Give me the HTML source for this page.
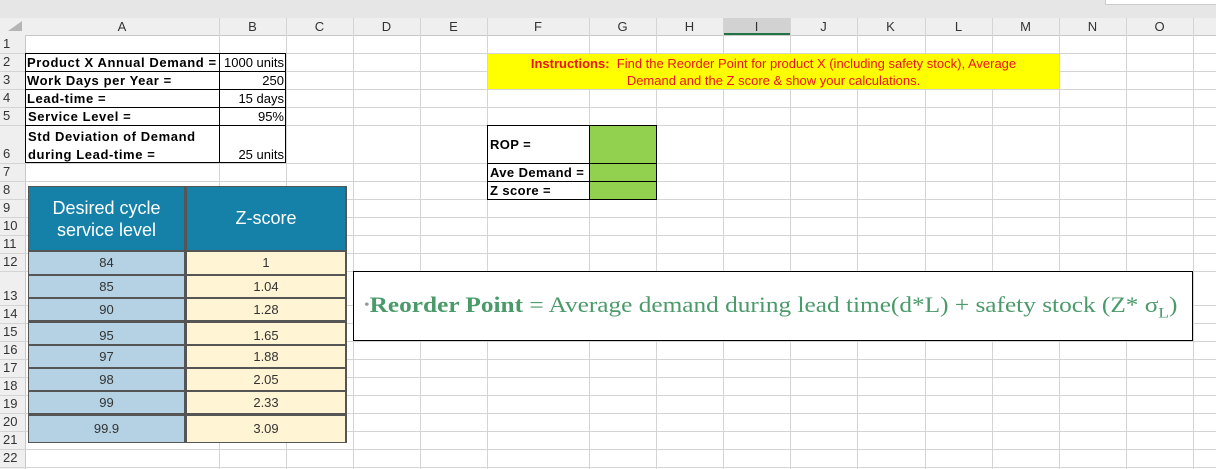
<!DOCTYPE html>
<html><head><style>
body{margin:0;width:1216px;height:469px;overflow:hidden;background:#fff;position:relative;font-family:"Liberation Sans",Arial,sans-serif}
.a{position:absolute}
.ch{position:absolute;top:18px;height:17px;font-size:13px;color:#333;text-align:center;line-height:18px}
.rh{position:absolute;left:0;width:22px;font-size:13px;color:#333;text-align:left;padding-left:3px}
.b{font-weight:bold;font-size:13px;letter-spacing:0.6px;color:#000;white-space:nowrap}
.n{font-size:13px;color:#000;text-align:right}
</style></head><body>
<div class="a" style="left:0;top:0;width:1216px;height:18px;background:#e6e6e6"></div>
<div class="a" style="left:1105px;top:0;width:111px;height:4px;background:#fff;border:1px solid #ccc;border-top:none"></div>
<div class="a" style="left:0;top:18px;width:1216px;height:17px;background:#efefef;border-bottom:1px solid #c8c8c8"></div>
<div class="a" style="left:0;top:35px;width:25px;height:434px;background:#efefef;border-right:1px solid #c8c8c8"></div>
<div class="a" style="left:723px;top:18px;width:67px;height:17px;background:#d2d2d2;border-bottom:2px solid #217346;box-sizing:border-box"></div>
<svg class="a" style="left:0;top:0" width="1216" height="469">
<polygon points="8,31 22,31 22,21" fill="#b5b5b5"/>
<g stroke="#d4d4d4" stroke-width="1">
<line x1="219.5" y1="18" x2="219.5" y2="469"/><line x1="286.5" y1="18" x2="286.5" y2="469"/><line x1="353.5" y1="18" x2="353.5" y2="469"/><line x1="420.5" y1="18" x2="420.5" y2="469"/><line x1="487.5" y1="18" x2="487.5" y2="469"/><line x1="589.5" y1="18" x2="589.5" y2="469"/><line x1="656.5" y1="18" x2="656.5" y2="469"/><line x1="723.5" y1="18" x2="723.5" y2="469"/><line x1="790.5" y1="18" x2="790.5" y2="469"/><line x1="857.5" y1="18" x2="857.5" y2="469"/><line x1="925.5" y1="18" x2="925.5" y2="469"/><line x1="992.5" y1="18" x2="992.5" y2="469"/><line x1="1059.5" y1="18" x2="1059.5" y2="469"/><line x1="1126.5" y1="18" x2="1126.5" y2="469"/><line x1="1193.5" y1="18" x2="1193.5" y2="469"/>
<line x1="0" y1="53.5" x2="1216" y2="53.5"/><line x1="0" y1="71.5" x2="1216" y2="71.5"/><line x1="0" y1="89.5" x2="1216" y2="89.5"/><line x1="0" y1="107.5" x2="1216" y2="107.5"/><line x1="0" y1="125.5" x2="1216" y2="125.5"/><line x1="0" y1="163.5" x2="1216" y2="163.5"/><line x1="0" y1="181.5" x2="1216" y2="181.5"/><line x1="0" y1="199.5" x2="1216" y2="199.5"/><line x1="0" y1="217.5" x2="1216" y2="217.5"/><line x1="0" y1="235.5" x2="1216" y2="235.5"/><line x1="0" y1="253.5" x2="1216" y2="253.5"/><line x1="0" y1="271.5" x2="1216" y2="271.5"/><line x1="0" y1="305.5" x2="1216" y2="305.5"/><line x1="0" y1="323.5" x2="1216" y2="323.5"/><line x1="0" y1="341.5" x2="1216" y2="341.5"/><line x1="0" y1="359.5" x2="1216" y2="359.5"/><line x1="0" y1="377.5" x2="1216" y2="377.5"/><line x1="0" y1="395.5" x2="1216" y2="395.5"/><line x1="0" y1="413.5" x2="1216" y2="413.5"/><line x1="0" y1="431.5" x2="1216" y2="431.5"/><line x1="0" y1="449.5" x2="1216" y2="449.5"/><line x1="0" y1="467.5" x2="1216" y2="467.5"/>
</g>
</svg>
<div class="ch" style="left:25px;width:194px">A</div><div class="ch" style="left:219px;width:67px">B</div><div class="ch" style="left:286px;width:67px">C</div><div class="ch" style="left:353px;width:67px">D</div><div class="ch" style="left:420px;width:67px">E</div><div class="ch" style="left:487px;width:102px">F</div><div class="ch" style="left:589px;width:67px">G</div><div class="ch" style="left:656px;width:67px">H</div><div class="ch" style="left:723px;width:67px">I</div><div class="ch" style="left:790px;width:67px">J</div><div class="ch" style="left:857px;width:67px">K</div><div class="ch" style="left:925px;width:67px">L</div><div class="ch" style="left:992px;width:67px">M</div><div class="ch" style="left:1059px;width:67px">N</div><div class="ch" style="left:1126px;width:67px">O</div>
<div class="rh" style="top:36px">1</div><div class="rh" style="top:54px">2</div><div class="rh" style="top:72px">3</div><div class="rh" style="top:90px">4</div><div class="rh" style="top:108px">5</div><div class="rh" style="top:146px">6</div><div class="rh" style="top:164px">7</div><div class="rh" style="top:182px">8</div><div class="rh" style="top:200px">9</div><div class="rh" style="top:218px">10</div><div class="rh" style="top:236px">11</div><div class="rh" style="top:254px">12</div><div class="rh" style="top:288px">13</div><div class="rh" style="top:306px">14</div><div class="rh" style="top:324px">15</div><div class="rh" style="top:342px">16</div><div class="rh" style="top:360px">17</div><div class="rh" style="top:378px">18</div><div class="rh" style="top:396px">19</div><div class="rh" style="top:414px">20</div><div class="rh" style="top:432px">21</div><div class="rh" style="top:450px">22</div>

<div class="a" style="left:25px;top:53px;width:261px;height:110px;border:1px solid #000;box-sizing:border-box"></div>
<div class="a" style="left:219px;top:53px;width:1px;height:110px;background:#000"></div>
<div class="a" style="left:25px;top:71px;width:261px;height:1px;background:#000"></div>
<div class="a" style="left:25px;top:89px;width:261px;height:1px;background:#000"></div>
<div class="a" style="left:25px;top:107px;width:261px;height:1px;background:#000"></div>
<div class="a" style="left:25px;top:125px;width:261px;height:1px;background:#000"></div>
<div class="a b" style="left:27px;top:55px">Product X Annual Demand =</div>
<div class="a b" style="left:27px;top:73px">Work Days per Year =</div>
<div class="a b" style="left:27px;top:91px">Lead-time =</div>
<div class="a b" style="left:28px;top:109px">Service Level =</div>
<div class="a b" style="left:28px;top:128px;line-height:18px">Std Deviation of Demand<br>during Lead-time =</div>
<div class="a n" style="left:219px;width:65px;top:55px">1000 units</div>
<div class="a n" style="left:219px;width:65px;top:73px">250</div>
<div class="a n" style="left:219px;width:65px;top:91px">15 days</div>
<div class="a n" style="left:219px;width:65px;top:109px">95%</div>
<div class="a n" style="left:219px;width:65px;top:147px">25 units</div>

<div class="a" style="left:488px;top:54px;width:571px;height:35px;background:#ffff00;color:#e8141e;font-size:13px;text-align:center;line-height:17px;font-family:'Liberation Sans Narrow','Liberation Sans',sans-serif;padding-top:1px;box-sizing:border-box"><b>Instructions:</b>&nbsp; Find the Reorder Point for product X (including safety stock), Average<br>Demand and the Z score &amp; show your calculations.</div>

<div class="a" style="left:590px;top:126px;width:66px;height:73px;background:#92d050"></div>
<div class="a" style="left:487px;top:125px;width:170px;height:75px;border:1px solid #000;box-sizing:border-box"></div>
<div class="a" style="left:589px;top:125px;width:1px;height:75px;background:#000"></div>
<div class="a" style="left:487px;top:163px;width:170px;height:1px;background:#000"></div>
<div class="a" style="left:487px;top:181px;width:170px;height:1px;background:#000"></div>
<div class="a b" style="left:490px;top:137px;letter-spacing:0.4px">ROP =</div>
<div class="a b" style="left:490px;top:165px;letter-spacing:0.4px">Ave Demand =</div>
<div class="a b" style="left:490px;top:183px;letter-spacing:0.4px">Z score =</div>

<div class="a" style="left:28px;top:186px;width:319px;height:257px;background:#555"></div>
<div class="a" style="left:29px;top:187px;width:155px;height:63px;background:#1581a8;color:#fff;font-size:18px;text-align:center;line-height:22px;padding-top:10px;box-sizing:border-box">Desired cycle<br>service level</div>
<div class="a" style="left:187px;top:187px;width:158px;height:63px;background:#1581a8;color:#fff;font-size:18px;text-align:center;line-height:63px">Z-score</div>
<div class="a" style="left:29px;top:252px;width:155px;height:22px;background:#b4d2e3;font-size:13px;text-align:center;line-height:22px;color:#333">84</div><div class="a" style="left:187px;top:252px;width:158px;height:22px;background:#fff4d4;font-size:13px;text-align:center;line-height:22px;color:#333">1</div>
<div class="a" style="left:29px;top:276px;width:155px;height:21px;background:#b4d2e3;font-size:13px;text-align:center;line-height:21px;color:#333">85</div><div class="a" style="left:187px;top:276px;width:158px;height:21px;background:#fff4d4;font-size:13px;text-align:center;line-height:21px;color:#333">1.04</div>
<div class="a" style="left:29px;top:299px;width:155px;height:21px;background:#b4d2e3;font-size:13px;text-align:center;line-height:21px;color:#333">90</div><div class="a" style="left:187px;top:299px;width:158px;height:21px;background:#fff4d4;font-size:13px;text-align:center;line-height:21px;color:#333">1.28</div>
<div class="a" style="left:29px;top:323px;width:155px;height:21px;background:#b4d2e3;font-size:13px;text-align:center;line-height:25px;color:#333">95</div><div class="a" style="left:187px;top:323px;width:158px;height:21px;background:#fff4d4;font-size:13px;text-align:center;line-height:25px;color:#333">1.65</div>
<div class="a" style="left:29px;top:346px;width:155px;height:21px;background:#b4d2e3;font-size:13px;text-align:center;line-height:21px;color:#333">97</div><div class="a" style="left:187px;top:346px;width:158px;height:21px;background:#fff4d4;font-size:13px;text-align:center;line-height:21px;color:#333">1.88</div>
<div class="a" style="left:29px;top:369px;width:155px;height:21px;background:#b4d2e3;font-size:13px;text-align:center;line-height:21px;color:#333">98</div><div class="a" style="left:187px;top:369px;width:158px;height:21px;background:#fff4d4;font-size:13px;text-align:center;line-height:21px;color:#333">2.05</div>
<div class="a" style="left:29px;top:392px;width:155px;height:21px;background:#b4d2e3;font-size:13px;text-align:center;line-height:21px;color:#333">99</div><div class="a" style="left:187px;top:392px;width:158px;height:21px;background:#fff4d4;font-size:13px;text-align:center;line-height:21px;color:#333">2.33</div>
<div class="a" style="left:29px;top:416px;width:155px;height:26px;background:#b4d2e3;font-size:13px;text-align:center;line-height:26px;color:#333">99.9</div><div class="a" style="left:187px;top:416px;width:158px;height:26px;background:#fff4d4;font-size:13px;text-align:center;line-height:26px;color:#333">3.09</div>

<div class="a" style="left:353px;top:271px;width:840px;height:70px;border:1px solid #000;background:#fff;box-sizing:border-box"></div>
<div class="a" style="left:364px;top:292px;font-family:'Liberation Serif',serif;font-size:22px;color:#4a9a6a;white-space:nowrap;transform:scaleX(1.15);transform-origin:0 0"><span style="color:#999;font-size:14px;vertical-align:3px">•</span><b>Reorder Point</b> = Average demand during lead time(d*L) + safety stock (Z* σ<sub style="font-size:15px">L</sub>)</div>
</body></html>
